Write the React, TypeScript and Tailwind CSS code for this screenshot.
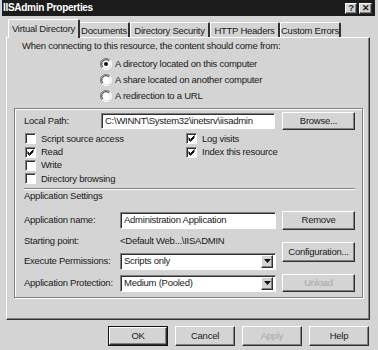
import React from "react";

const raised =
  "border border-t-white border-l-white border-r-[#303030] border-b-[#303030] shadow-[inset_-1px_-1px_0_#808080]";
const sunken =
  "border border-t-[#808080] border-l-[#808080] border-r-white border-b-white shadow-[inset_1px_1px_0_#303030]";

const Radio = ({ on }: { on?: boolean }) => (
  <svg width="12" height="12" viewBox="0 0 12 12" className="shrink-0">
    <path d="M10 2 A5.5 5.5 0 0 0 2 10" fill="none" stroke="#808080" strokeWidth="1" />
    <path d="M2 10 A5.5 5.5 0 0 0 10 2" fill="none" stroke="#ffffff" strokeWidth="1" />
    <circle cx="6" cy="6" r="4.5" fill="#fff" />
    <path d="M9 3 A4.2 4.2 0 0 0 3 9" fill="none" stroke="#303030" strokeWidth="1" />
    {on && <circle cx="6" cy="6" r="2" fill="#111" />}
  </svg>
);

const Check = ({ on }: { on?: boolean }) => (
  <div className={`w-[11px] h-[11px] bg-white shrink-0 ${sunken} relative`}>
    {on && (
      <svg width="9" height="9" viewBox="0 0 9 9" className="absolute left-0 top-0">
        <path d="M1.5 3.5 L3.5 5.5 L7.5 1.5 M1.5 4.5 L3.5 6.5 L7.5 2.5 M1.5 5.5 L3.5 7.5 L7.5 3.5" stroke="#111" strokeWidth="1" fill="none" />
      </svg>
    )}
  </div>
);

const Button = ({ label, className = "", disabled }: { label: string; className?: string; disabled?: boolean }) => (
  <div
    className={`${raised} flex items-center justify-center whitespace-nowrap ${disabled ? "text-[#a8a8a8]" : "text-[#1a1a1a]"} ${className}`}
  >
    {label}
  </div>
);

const Select = ({ value }: { value: string }) => (
  <div className={`${sunken} bg-white w-[156px] h-[17px] flex items-center justify-between pl-[3px] pr-[2px]`}>
    <span>{value}</span>
    <div className={`${raised} bg-[#d4d4d4] w-[12px] h-[13px] flex items-center justify-center`}>
      <svg width="7" height="4" viewBox="0 0 7 4">
        <path d="M0 0 H7 L3.5 4 Z" fill="#111" />
      </svg>
    </div>
  </div>
);

const tabs = [
  { label: "Virtual Directory", w: "w-[72px]" },
  { label: "Documents", w: "w-[51px]" },
  { label: "Directory Security", w: "w-[80px]" },
  { label: "HTTP Headers", w: "w-[70px]" },
  { label: "Custom Errors", w: "w-[61px]" },
];

export default function App() {
  return (
    <div
      className="w-[378px] h-[350px] bg-[#d4d4d4] flex flex-col overflow-hidden text-[9.5px] tracking-[-0.25px] text-[#1a1a1a] leading-[12px]"
      style={{ fontFamily: '"Liberation Sans", Arial, sans-serif' }}
    >
      {/* title bar */}
      <div className="h-[16px] ml-[2px] mr-[3px] bg-[#1c1c1c] flex items-center justify-between pl-[1px] pr-[3px] shrink-0">
        <span className="text-white font-bold text-[10px] tracking-[-0.3px]">IISAdmin Properties</span>
        <div className="flex gap-[2px]">
          <div className={`${raised} bg-[#d4d4d4] w-[12px] h-[11px] flex items-center justify-center font-bold text-[9px]`}>?</div>
          <div className={`${raised} bg-[#d4d4d4] w-[13px] h-[11px] flex items-center justify-center font-bold text-[9px]`}>✕</div>
        </div>
      </div>

      {/* tabs */}
      <div className="flex items-end h-[22px] pl-[8px] shrink-0">
        {tabs.map((t, i) => (
          <div
            key={t.label}
            className={`${t.w} ${
              i === 0
                ? "h-[19px] border-t border-l border-t-white border-l-white border-r-2 border-r-[#303030] -mr-[1px] relative z-10 bg-[#d4d4d4] pt-[3px]"
                : "h-[16px] border-t border-l border-t-white border-l-white border-r-2 border-r-[#303030] pt-[2px]"
            } rounded-t-[2px] whitespace-nowrap text-center overflow-hidden`}
          >
            {t.label}
          </div>
        ))}
      </div>

      {/* panel */}
      <div className="ml-[6px] w-[364px] h-[283px] border border-t-white border-l-white border-r-[#303030] border-b-[#303030] shadow-[inset_-1px_-1px_0_#808080] flex flex-col shrink-0 -mt-[1px]">
        <div className="pl-[15px] mt-[2px]">When connecting to this resource, the content should come from:</div>
        <div className="flex flex-col mt-[4px] pl-[93px]">
          <div className="h-[16px] flex items-center gap-[3px]">
            <Radio on />
            <span>A directory located on this computer</span>
          </div>
          <div className="h-[16px] flex items-center gap-[3px]">
            <Radio />
            <span>A share located on another computer</span>
          </div>
          <div className="h-[16px] flex items-center gap-[3px]">
            <Radio />
            <span>A redirection to a URL</span>
          </div>
        </div>

        {/* frame */}
        <div className="ml-[7px] mt-[4px] w-[349px] h-[190px] border border-[#808080] shadow-[1px_1px_0_#fff,inset_1px_1px_0_#fff] flex flex-col whitespace-nowrap">
          <div className="h-[18px] mt-[3px] flex items-center pl-[9px]">
            <span className="w-[77px]">Local Path:</span>
            <div className={`${sunken} bg-white w-[174px] h-[16px] flex items-center pl-[3px]`}>C:\WINNT\System32\inetsrv\iisadmin</div>
            <Button label="Browse..." className="ml-[7px] w-[73px] h-[18px]" />
          </div>
          <div className="flex mt-[2px] pl-[10px]">
            <div className="flex flex-col w-[161px]">
              {[
                ["Script source access", false],
                ["Read", true],
                ["Write", false],
                ["Directory browsing", false],
              ].map(([l, on]) => (
                <div key={l as string} className="h-[13.4px] flex items-center gap-[5px]">
                  <Check on={on as boolean} />
                  <span>{l as string}</span>
                </div>
              ))}
            </div>
            <div className="flex flex-col">
              {[
                ["Log visits", true],
                ["Index this resource", true],
              ].map(([l, on]) => (
                <div key={l as string} className="h-[13.4px] flex items-center gap-[5px]">
                  <Check on={on as boolean} />
                  <span>{l as string}</span>
                </div>
              ))}
            </div>
          </div>
          <div className="ml-[9px] mt-[2px] w-[331px] h-[2px] border-t border-t-[#808080] border-b border-b-white" />
          <div className="pl-[9px] mt-[0px]">Application Settings</div>
          <div className="flex mt-[9px] pl-[9px]">
            <div className="flex flex-col">
              <div className="h-[19px] flex items-center">
                <span className="w-[96px]">Application name:</span>
                <div className={`${sunken} bg-white w-[156px] h-[17px] flex items-center pl-[3px]`}>Administration Application</div>
              </div>
              <div className="h-[21px] flex items-center mt-[1px]">
                <span className="w-[96px]">Starting point:</span>
                <span>&lt;Default Web...\IISADMIN</span>
              </div>
              <div className="h-[19px] flex items-center mt-[0px]">
                <span className="w-[96px]">Execute Permissions:</span>
                <Select value="Scripts only" />
              </div>
              <div className="h-[19px] flex items-center mt-[3px]">
                <span className="w-[96px]">Application Protection:</span>
                <Select value="Medium (Pooled)" />
              </div>
            </div>
            <div className="flex flex-col ml-[6px]">
              <Button label="Remove" className="w-[73px] h-[19px]" />
              <Button label="Configuration..." className="w-[73px] h-[20px] mt-[12px]" />
              <Button label="Unload" disabled className="w-[73px] h-[18px] mt-[12px]" />
            </div>
          </div>
        </div>
      </div>

      {/* bottom buttons */}
      <div className="flex justify-end gap-[7px] mt-[6px] pr-[9px] shrink-0">
        <div className="border border-[#111]">
          <Button label="OK" className="w-[58px] h-[18px]" />
        </div>
        <Button label="Cancel" className="w-[60px] h-[20px]" />
        <Button label="Apply" disabled className="w-[60px] h-[20px]" />
        <Button label="Help" className="w-[60px] h-[20px]" />
      </div>
    </div>
  );
}
